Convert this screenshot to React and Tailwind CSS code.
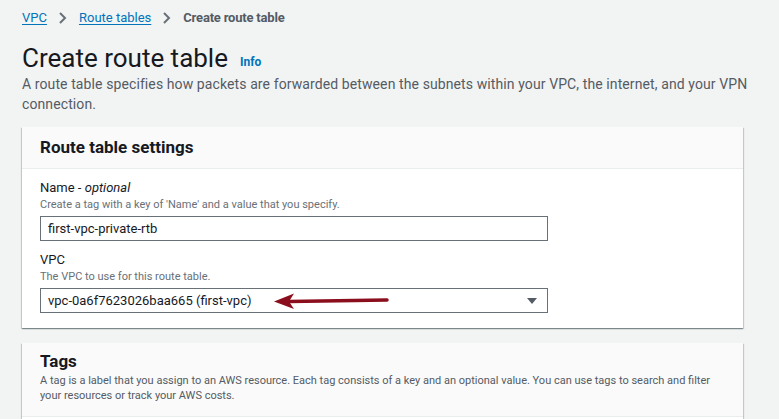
import { useState } from "react";

const Chevron = () => (
  <svg width="10" height="14" viewBox="0 0 10 14" className="mx-[11px]">
    <path d="M2 2l5 5-5 5" fill="none" stroke="#687078" strokeWidth="2" />
  </svg>
);

const Field = ({ label, optional, hint, children }) => (
  <div className="mb-[10px]">
    <p className="text-[13px] leading-[18px] text-[#16191f]">
      {label}
      {optional && (
        <>
          {" - "}
          <i>optional</i>
        </>
      )}
    </p>
    <p className="text-[11px] leading-[16px] text-[#687078] mb-[3px]">{hint}</p>
    {children}
  </div>
);

export default function App() {
  const [name, setName] = useState("first-vpc-private-rtb");

  return (
    <div
      className="h-[419px] overflow-hidden bg-[#f2f3f3] px-[22px] pt-[8px] text-[#16191f]"
      style={{ fontFamily: "Roboto, 'Open Sans', sans-serif" }}
    >
      {/* breadcrumb */}
      <div className="flex items-center text-[13px] h-[20px]">
        <a className="text-[#0073bb] underline underline-offset-2">VPC</a>
        <Chevron />
        <a className="text-[#0073bb] underline underline-offset-2">Route tables</a>
        <Chevron />
        <span className="font-bold text-[#545b64] tracking-[-0.2px]">Create route table</span>
      </div>

      <div className="flex items-end mt-[14px]">
        <h1 className="text-[26px] leading-[32px] font-normal">Create route table</h1>
        <span className="ml-3 mb-[3px] text-[12px] font-bold text-[#0073bb]">Info</span>
      </div>
      <p className="text-[14px] leading-[20px] text-[#545b64] tracking-[0.1px] pr-2">
        A route table specifies how packets are forwarded between the subnets within your VPC, the internet, and your VPN
        connection.
      </p>

      {/* settings card */}
      <div className="w-[721px] mt-[13px] bg-white shadow-[0_1px_1px_0_rgba(0,28,36,0.3),1px_1px_1px_0_rgba(0,28,36,0.15),-1px_1px_1px_0_rgba(0,28,36,0.15)]">
        <div className="bg-[#fafafa] border-b border-[#eaeded] h-[42px] flex items-center px-[18px]">
          <h2 className="text-[17px] font-bold">Route table settings</h2>
        </div>
        <div className="px-[18px] pt-[10px] pb-[5px]">
          <Field label="Name" optional hint="Create a tag with a key of 'Name' and a value that you specify.">
            <input
              value={name}
              onChange={(e) => setName(e.target.value)}
              className="w-[508px] h-[25px] border border-[#687078] px-[7px] text-[13px] outline-none"
            />
          </Field>
          <Field label="VPC" hint="The VPC to use for this route table.">
            <div className="relative w-[508px] h-[25px] border border-[#687078] px-[7px] flex items-center text-[13px]">
              vpc-0a6f7623026baa665 (first-vpc)
              <svg width="12" height="8" viewBox="0 0 12 8" className="absolute right-[9px] top-[8px]">
                <path d="M1 1h10L6 7z" fill="#545b64" />
              </svg>
              <svg width="120" height="18" viewBox="0 0 120 18" className="absolute left-[232px] top-[3px]">
                <path d="M16 9.5 L114 8" stroke="#8b0e1d" strokeWidth="3.5" strokeLinecap="round" />
                <path d="M1 9.5 L21 1.5 L16 9.5 L21 17 Z" fill="#8b0e1d" />
              </svg>
            </div>
          </Field>
        </div>
      </div>

      {/* tags card */}
      <div className="w-[721px] mt-[15px] bg-[#fafafa] shadow-[0_1px_1px_0_rgba(0,28,36,0.3),1px_1px_1px_0_rgba(0,28,36,0.15),-1px_1px_1px_0_rgba(0,28,36,0.15)]">
        <div className="border-b border-[#eaeded] px-[18px] pt-[7px] pb-[13px]">
          <h2 className="text-[17px] font-bold leading-[22px]">Tags</h2>
          <p className="text-[11px] leading-[15px] text-[#545b64] mt-[1px]">
            A tag is a label that you assign to an AWS resource. Each tag consists of a key and an optional value. You can use tags to search and filter
            your resources or track your AWS costs.
          </p>
        </div>
        <div className="h-[20px] bg-white" />
      </div>
    </div>
  );
}
